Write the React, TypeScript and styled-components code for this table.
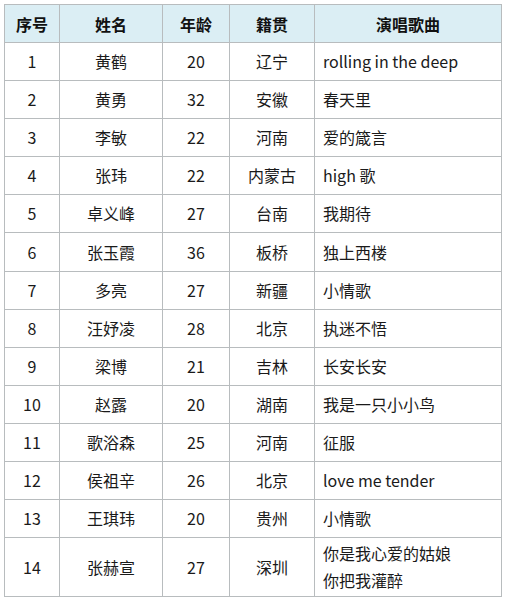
import React from "react";
import styled, { createGlobalStyle } from "styled-components";

const Global = createGlobalStyle`
  html, body { margin: 0; padding: 0; background: #fff; }
  body { font-family: "Noto Sans CJK SC", "Noto Sans", sans-serif; color: #1a1a1a; }
`;

const Page = styled.div`
  padding: 4px 0 0 4px;
`;

const Table = styled.table`
  border-collapse: collapse;
  width: 497px;
  table-layout: fixed;
  font-size: 16px;
`;

const HeadRow = styled.tr`
  height: 38px;
  background: #dbeef4;
`;

const Th = styled.th`
  border: 1px solid #b8bcbe;
  font-weight: 700;
  text-align: center;
  padding: 0;
  color: #111;
`;

const Row = styled.tr<{ $tall?: boolean }>`
  height: ${(p) => (p.$tall ? 59 : 38.1)}px;
`;

const Td = styled.td<{ $left?: boolean }>`
  border: 1px solid #b8bcbe;
  text-align: ${(p) => (p.$left ? "left" : "center")};
  padding: ${(p) => (p.$left ? "0 0 0 8px" : "0")};
  line-height: 27px;
  font-weight: 400;
`;

const cols = [55, 103, 67, 85, 187];

const data: [string, string, string, string, string[]][] = [
  ["1", "黄鹤", "20", "辽宁", ["rolling in the deep"]],
  ["2", "黄勇", "32", "安徽", ["春天里"]],
  ["3", "李敏", "22", "河南", ["爱的箴言"]],
  ["4", "张玮", "22", "内蒙古", ["high 歌"]],
  ["5", "卓义峰", "27", "台南", ["我期待"]],
  ["6", "张玉霞", "36", "板桥", ["独上西楼"]],
  ["7", "多亮", "27", "新疆", ["小情歌"]],
  ["8", "汪妤凌", "28", "北京", ["执迷不悟"]],
  ["9", "梁博", "21", "吉林", ["长安长安"]],
  ["10", "赵露", "20", "湖南", ["我是一只小小鸟"]],
  ["11", "歌浴森", "25", "河南", ["征服"]],
  ["12", "侯祖辛", "26", "北京", ["love me tender"]],
  ["13", "王琪玮", "20", "贵州", ["小情歌"]],
  ["14", "张赫宣", "27", "深圳", ["你是我心爱的姑娘", "你把我灌醉"]],
];

export default function App() {
  return (
    <>
      <Global />
      <Page>
        <Table>
          <colgroup>
            {cols.map((w, i) => (
              <col key={i} style={{ width: w }} />
            ))}
          </colgroup>
          <thead>
            <HeadRow>
              <Th>序号</Th>
              <Th>姓名</Th>
              <Th>年龄</Th>
              <Th>籍贯</Th>
              <Th>演唱歌曲</Th>
            </HeadRow>
          </thead>
          <tbody>
            {data.map(([n, name, age, place, songs]) => (
              <Row key={n} $tall={songs.length > 1}>
                <Td>{n}</Td>
                <Td>{name}</Td>
                <Td>{age}</Td>
                <Td>{place}</Td>
                <Td $left>
                  {songs.map((s, i) => (
                    <div key={i}>{s}</div>
                  ))}
                </Td>
              </Row>
            ))}
          </tbody>
        </Table>
      </Page>
    </>
  );
}
